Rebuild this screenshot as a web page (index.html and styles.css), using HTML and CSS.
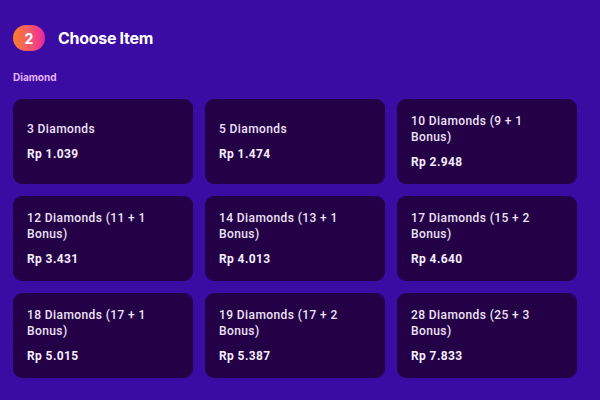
FILE: index.html
```html
<!DOCTYPE html>
<html>
<head>
<meta charset="utf-8">
<link rel="stylesheet" href="styles.css">
</head>
<body>
<div class="page">
  <div class="header">
    <div class="badge">2</div>
    <div class="title">Choose Item</div>
  </div>
  <div class="label">Diamond</div>
  <div class="grid">
    <div class="card"><div class="name">3 Diamonds</div><div class="price">Rp 1.039</div></div>
    <div class="card"><div class="name">5 Diamonds</div><div class="price">Rp 1.474</div></div>
    <div class="card"><div class="name">10 Diamonds (9 + 1 Bonus)</div><div class="price">Rp 2.948</div></div>
    <div class="card"><div class="name">12 Diamonds (11 + 1 Bonus)</div><div class="price">Rp 3.431</div></div>
    <div class="card"><div class="name">14 Diamonds (13 + 1 Bonus)</div><div class="price">Rp 4.013</div></div>
    <div class="card"><div class="name">17 Diamonds (15 + 2 Bonus)</div><div class="price">Rp 4.640</div></div>
    <div class="card"><div class="name">18 Diamonds (17 + 1 Bonus)</div><div class="price">Rp 5.015</div></div>
    <div class="card"><div class="name">19 Diamonds (17 + 2 Bonus)</div><div class="price">Rp 5.387</div></div>
    <div class="card"><div class="name">28 Diamonds (25 + 3 Bonus)</div><div class="price">Rp 7.833</div></div>
  </div>
</div>
</body>
</html>
```
FILE: styles.css
```css
html, body {
  margin: 0;
  padding: 0;
  background: #3a0ca3;
  width: 600px;
  height: 400px;
  overflow: hidden;
}
.page {
  padding: 25px 13px;
  font-family: "Inter", "Roboto", sans-serif;
  color: #fff;
}
.header {
  display: flex;
  align-items: center;
  height: 26px;
}
.badge {
  width: 32px;
  height: 26px;
  border-radius: 13px;
  background: linear-gradient(90deg, #fa7f25 0%, #f4566f 55%, #e9259e 100%);
  color: #fff;
  font-weight: 700;
  font-size: 14px;
  display: flex;
  align-items: center;
  justify-content: center;
}
.title {
  margin-left: 13px;
  font-size: 16px;
  font-weight: 700;
  letter-spacing: -0.3px;
}
.label {
  margin-top: 19px;
  height: 14px;
  line-height: 14px;
  font-size: 10px;
  font-weight: 700;
  color: #e2b6ff;
}
.grid {
  margin-top: 15px;
  display: grid;
  grid-template-columns: repeat(3, 180px);
  grid-auto-rows: 85px;
  gap: 12px;
}
.card {
  background: #240046;
  border-radius: 9px;
  padding: 0 14px;
  display: flex;
  flex-direction: column;
  justify-content: center;
  font-family: "Roboto", sans-serif;
  font-size: 12px;
  line-height: 16px;
  letter-spacing: 0.4px;
}
.name {
  color: #ece4f7;
  font-weight: 500;
}
.price {
  margin-top: 9px;
  font-weight: 700;
  color: #f3eefa;
}
```
